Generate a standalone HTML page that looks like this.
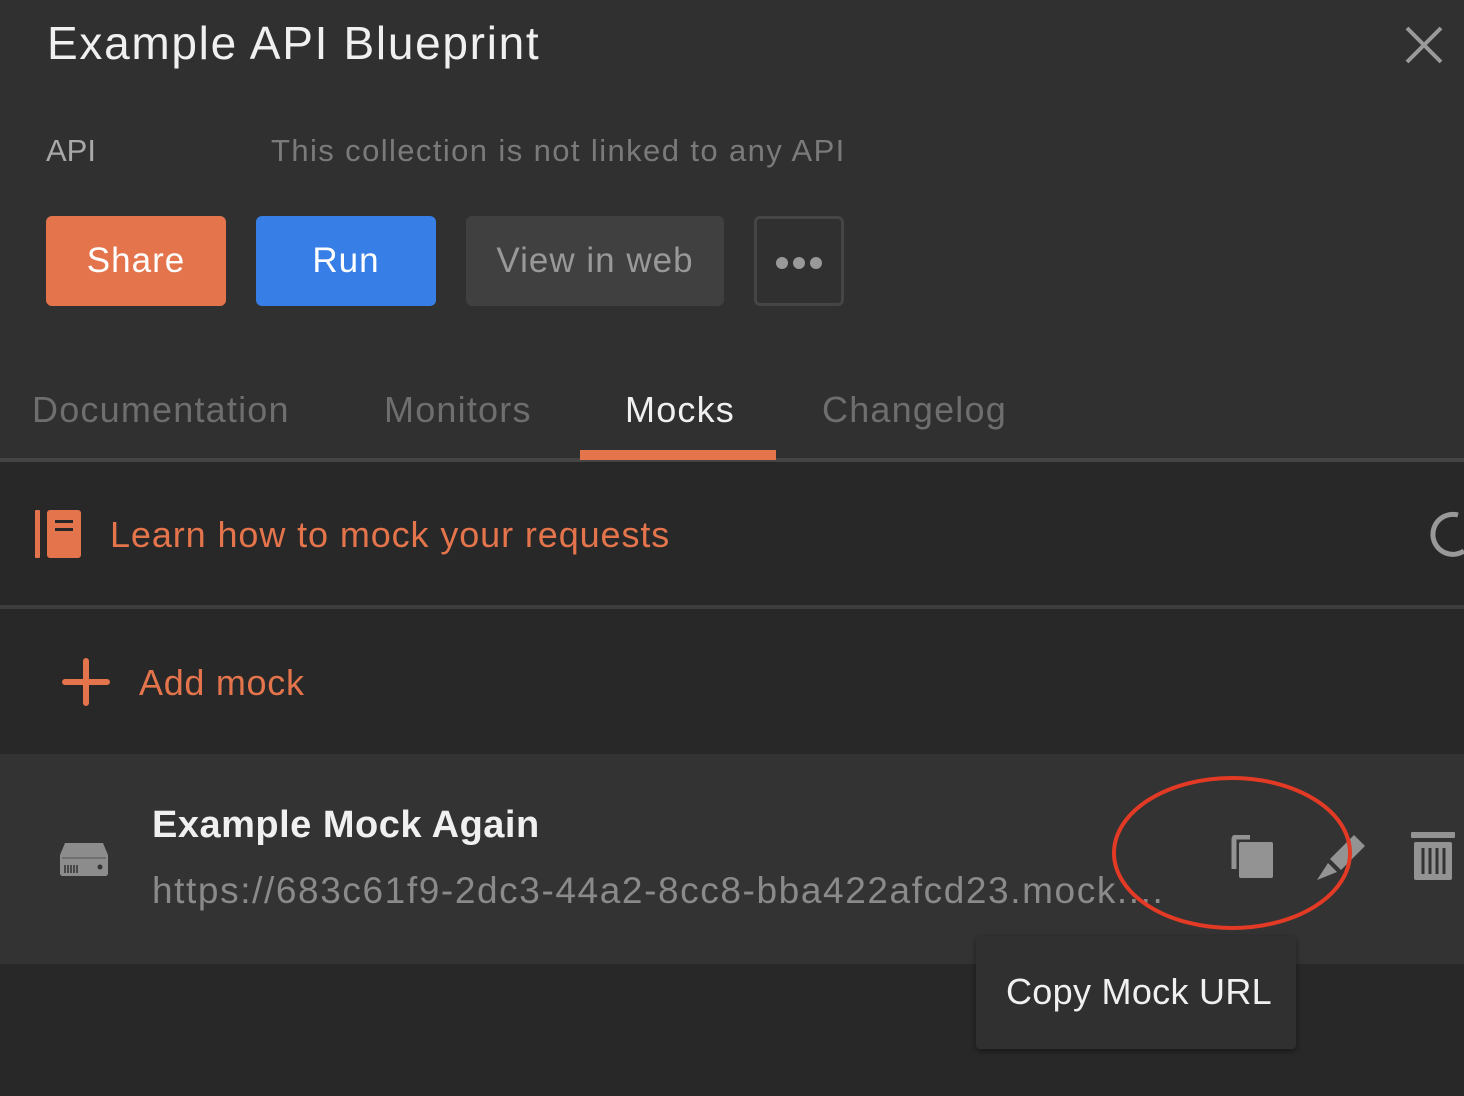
<!DOCTYPE html>
<html><head><style>
body{margin:0;width:1464px;height:1096px;background:#282828;font-family:"Liberation Sans",sans-serif;position:relative;overflow:hidden}
.a{position:absolute;white-space:nowrap}
.top{position:absolute;left:0;top:0;width:1464px;height:458px;background:#303030}
.btn{position:absolute;top:216px;height:90px;border-radius:6px;font-size:35px;line-height:90px;text-align:center}
.tab{font-size:36px;letter-spacing:1.2px}
</style></head><body>
<div class="top"></div>
<div class="a" style="left:47px;top:16px;font-size:46px;color:#f0f0f0;letter-spacing:1.7px">Example API Blueprint</div>
<svg class="a" style="left:1404px;top:25px" width="40" height="40"><path d="M3 3L37 37M37 3L3 37" stroke="#9a9a9a" stroke-width="4"/></svg>
<div class="a" style="left:46px;top:133px;font-size:31px;color:#a8a8a8">API</div>
<div class="a" style="left:271px;top:133px;font-size:31px;color:#7a7a7a;letter-spacing:1.4px">This collection is not linked to any API</div>
<div class="btn" style="left:46px;width:180px;background:#e4744b;color:#fff;letter-spacing:1px">Share</div>
<div class="btn" style="left:256px;width:180px;background:#377fe6;color:#fff;letter-spacing:1px">Run</div>
<div class="btn" style="left:466px;width:258px;background:#404040;color:#999;letter-spacing:1px">View in web</div>
<div class="btn" style="left:754px;width:84px;height:84px;border:3px solid #454545;line-height:84px"><svg width="50" height="14" style="vertical-align:middle"><circle cx="8" cy="7" r="6" fill="#999"/><circle cx="25" cy="7" r="6" fill="#999"/><circle cx="42" cy="7" r="6" fill="#999"/></svg></div>
<div class="a tab" style="left:32px;top:389px;color:#6e6e6e">Documentation</div>
<div class="a tab" style="left:384px;top:389px;color:#6e6e6e">Monitors</div>
<div class="a tab" style="left:625px;top:389px;color:#f0f0f0">Mocks</div>
<div class="a tab" style="left:822px;top:389px;color:#6e6e6e">Changelog</div>
<div class="a" style="left:0;top:458px;width:1464px;height:4px;background:#444"></div>
<div class="a" style="left:580px;top:450px;width:196px;height:10px;background:#e4744b"></div>
<svg class="a" style="left:35px;top:510px" width="46" height="50"><rect x="0" y="0" width="5" height="48" rx="1" fill="#e4744b"/><rect x="12" y="0" width="34" height="48" rx="3" fill="#e4744b"/><rect x="20" y="10" width="18" height="3" fill="#282828"/><rect x="20" y="18" width="18" height="3" fill="#282828"/></svg>
<div class="a" style="left:110px;top:514px;font-size:36px;color:#e4744b;letter-spacing:0.9px">Learn how to mock your requests</div>
<svg class="a" style="left:1428px;top:505px" width="36" height="52"><path d="M30 10A20 20 0 1 0 36 46" fill="none" stroke="#999" stroke-width="5"/></svg>
<div class="a" style="left:0;top:605px;width:1464px;height:4px;background:#3d3d3d"></div>
<svg class="a" style="left:62px;top:658px" width="48" height="48"><path d="M3 24H45M24 3V45" stroke="#e4744b" stroke-width="6" stroke-linecap="round"/></svg>
<div class="a" style="left:139px;top:662px;font-size:36px;color:#e4744b;letter-spacing:0.7px">Add mock</div>
<div class="a" style="left:0;top:754px;width:1464px;height:210px;background:#333"></div>
<svg class="a" style="left:60px;top:843px" width="48" height="34"><path d="M5 0H43L48 12V30Q48 33 45 33H3Q0 33 0 30V12Z" fill="#8c8c8c"/><path d="M5 22V30M8 22V30M11 22V30M14 22V30M17 22V30" stroke="#333" stroke-width="1.5"/><circle cx="40" cy="24" r="2.5" fill="#333"/><rect x="2" y="14" width="44" height="2" fill="#333" opacity=".3"/></svg>
<div class="a" style="left:152px;top:804px;font-size:38px;color:#f0f0f0;font-weight:bold;letter-spacing:0.5px">Example Mock Again</div>
<div class="a" style="left:152px;top:870px;font-size:37px;color:#8a8a8a;letter-spacing:1.6px">https://683c61f9-2dc3-44a2-8cc8-bba422afcd23.mock....</div>
<svg class="a" style="left:1230px;top:835px" width="44" height="46"><path d="M4 34V4Q4 2 6 2H20" fill="none" stroke="#939393" stroke-width="5"/><rect x="9" y="7" width="34" height="36" rx="2" fill="#939393"/></svg>
<svg class="a" style="left:1316px;top:833px" width="52" height="50"><path d="M38 2L49 13L25 37L14 26Z" fill="#939393"/><path d="M12 30L21 39L1 47Z" fill="#939393"/></svg>
<svg class="a" style="left:1410px;top:832px" width="46" height="50"><rect x="1" y="0" width="44" height="6" rx="1" fill="#939393"/><rect x="4" y="10" width="38" height="38" rx="2" fill="#939393"/><path d="M13 16V42M20 16V42M27 16V42M34 16V42" stroke="#333" stroke-width="3"/></svg>
<svg class="a" style="left:1110px;top:775px" width="245" height="160"><ellipse cx="122" cy="78" rx="118" ry="75" fill="none" stroke="#e33a25" stroke-width="4"/></svg>
<div class="a" style="left:976px;top:936px;width:320px;height:113px;background:#303030;box-shadow:0 2px 6px rgba(0,0,0,.4);border-radius:4px"></div>
<div class="a" style="left:1006px;top:971px;font-size:36px;color:#f0f0f0;letter-spacing:0.3px">Copy Mock URL</div>
</body></html>
